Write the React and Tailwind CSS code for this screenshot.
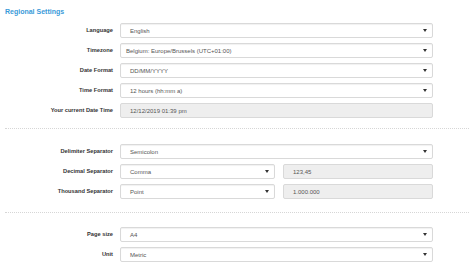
import React from 'react'

// Regional settings form, two dotted-divided groups of label / field rows.
const font = { fontFamily: '"Liberation Sans", Arial, sans-serif' }

function Caret() {
  return (
    <svg width="4" height="3" viewBox="0 0 4 3" className="shrink-0">
      <path d="M0 0 H4 L2 3 Z" fill="#333" />
    </svg>
  )
}

function Select({ value, pad = 'pl-[9px]', className = '' }) {
  return (
    <div
      className={`h-[15px] flex items-center justify-between ${pad} pr-[5px] bg-white border border-[#d9d9d9] rounded-[2px] shadow-[inset_0_1px_1px_rgba(0,0,0,0.06)] ${className}`}
    >
      <span className="text-[6px] text-[#555] leading-none">{value}</span>
      <Caret />
    </div>
  )
}

function ReadOnly({ value, className = '' }) {
  return (
    <div
      className={`h-[15px] flex items-center pl-[9px] bg-[#eeeeee] border border-[#d9d9d9] rounded-[2px] ${className}`}
    >
      <span className="text-[6px] text-[#555] leading-none">{value}</span>
    </div>
  )
}

function Row({ label, children }) {
  return (
    <div className="flex items-center gap-[7px]">
      <div className="w-[108px] text-right text-[5.7px] font-bold text-[#333] leading-none">
        {label}
      </div>
      <div className="w-[313px] flex gap-[8px]">{children}</div>
    </div>
  )
}

export default function App() {
  return (
    <div className="w-[474px] h-[271px] bg-white px-[5px] overflow-hidden" style={font}>
      <h1 className="pt-[7px] h-[23px] text-[7px] font-bold text-[#3a9ad9] leading-[9px]">
        Regional Settings
      </h1>

      <div className="flex flex-col gap-[5px]">
        <Row label="Language">
          <Select value="English" className="flex-1" />
        </Row>
        <Row label="Timezone">
          <Select value="Belgium: Europe/Brussels (UTC+01:00)" pad="pl-[5px]" className="flex-1" />
        </Row>
        <Row label="Date Format">
          <Select value="DD/MM/YYYY" className="flex-1" />
        </Row>
        <Row label="Time Format">
          <Select value="12 hours (hh:mm a)" className="flex-1" />
        </Row>
        <Row label="Your current Date Time">
          <ReadOnly value="12/12/2019 01:39 pm" className="flex-1" />
        </Row>
      </div>

      <div className="mt-[10px] mb-[15px] border-t border-dotted border-[#d6d6d6]" />

      <div className="flex flex-col gap-[5px]">
        <Row label="Delimiter Separator">
          <Select value="Semicolon" className="flex-1" />
        </Row>
        <Row label="Decimal Separator">
          <Select value="Comma" className="flex-1" />
          <ReadOnly value="123,45" className="flex-1" />
        </Row>
        <Row label="Thousand Separator">
          <Select value="Point" className="flex-1" />
          <ReadOnly value="1.000.000" className="flex-1" />
        </Row>
      </div>

      <div className="mt-[13px] mb-[14px] border-t border-dotted border-[#d6d6d6]" />

      <div className="flex flex-col gap-[5px]">
        <Row label="Page size">
          <Select value="A4" className="flex-1" />
        </Row>
        <Row label="Unit">
          <Select value="Metric" className="flex-1" />
        </Row>
      </div>
    </div>
  )
}
